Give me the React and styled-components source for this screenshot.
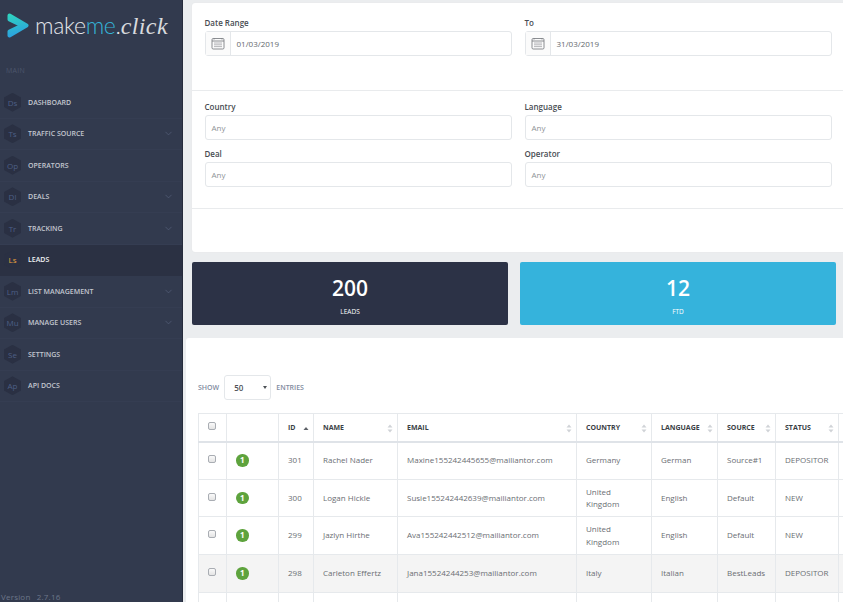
import React from 'react';
import styled, { createGlobalStyle } from 'styled-components';
import { ChevronDown } from 'lucide-react';

const GlobalStyle = createGlobalStyle`
  html, body {
    margin: 0;
    padding: 0;
    height: 100%;
    overflow: hidden;
    font-family: 'Open Sans', sans-serif;
    background: #ebedef;
  }
  * { box-sizing: border-box; }
`;

const Page = styled.div`
  display: grid;
  grid-template-columns: 183px 1fr;
  width: 843px;
  height: 602px;
  overflow: hidden;
`;

const Sidebar = styled.aside`
  display: flex;
  flex-direction: column;
  height: 602px;
  background: #323a4e;
  border-right: 1px solid #262c3c;
`;

const Logo = styled.div`
  display: flex;
  align-items: center;
  height: 50px;
  padding-left: 6px;
`;

const LogoWord = styled.span`
  margin-left: 6px;
  font-family: Lato, sans-serif;
  font-weight: 300;
  font-size: 23px;
  letter-spacing: -0.3px;
  color: #e4e6ea;
  white-space: nowrap;
`;

const LogoAccent = styled.span`
  color: #35b4d8;
`;

const LogoScript = styled.span`
  font-family: 'Liberation Serif', serif;
  font-style: italic;
  font-size: 24px;
  letter-spacing: 0.4px;
  color: #d8dade;
`;

const SectionLabel = styled.div`
  margin-top: 16px;
  padding-left: 6px;
  font-size: 7px;
  line-height: 10px;
  color: #4c556c;
  letter-spacing: 0.3px;
`;

const Nav = styled.nav`
  display: flex;
  flex-direction: column;
  margin-top: 11px;
`;

const NavItem = styled.div`
  display: flex;
  align-items: center;
  height: 31.5px;
  padding: 0 8px 0 4px;
  background: ${(p) => (p.$active ? '#2b3143' : 'transparent')};
  border-bottom: 1px solid ${(p) => (p.$active ? '#2b3143' : '#353d52')};
`;

const Hex = styled.span`
  display: flex;
  align-items: center;
  justify-content: center;
  flex: none;
  width: 17px;
  height: 19px;
  clip-path: polygon(50% 0, 100% 25%, 100% 75%, 50% 100%, 0 75%, 0 25%);
  background: #2a3043;
  font-size: 8px;
  color: ${(p) => (p.$active ? '#e8a23d' : '#4d5f85')};
`;

const NavLabel = styled.span`
  flex: 1;
  margin-left: 7px;
  font-size: 7px;
  font-weight: 600;
  color: ${(p) => (p.$active ? '#f0f1f4' : '#c2c6cf')};
  white-space: nowrap;
`;

const NavChevron = styled(ChevronDown)`
  color: #56607a;
`;

const Version = styled.div`
  margin-top: auto;
  padding: 0 0 0 1px;
  height: 11px;
  font-size: 8px;
  line-height: 11px;
  letter-spacing: 0.2px;
  color: #6d7689;
  word-spacing: 4px;
`;

const Main = styled.main`
  display: flex;
  flex-direction: column;
  padding-top: 3px;
  min-width: 0;
`;

const FilterPanel = styled.section`
  display: flex;
  flex-direction: column;
  height: 249px;
  margin-left: 9px;
  background: #fff;
  border-radius: 3px 0 0 3px;
  box-shadow: 0 0 1px #d9dcdf;
`;

const FilterRow = styled.div`
  display: grid;
  grid-template-columns: 307px 307px;
  column-gap: 13px;
  align-content: start;
  height: ${(p) => p.$height}px;
  padding: ${(p) => p.$top}px 0 0 12.5px;
  border-bottom: ${(p) => (p.$line ? '1px solid #e9ebed' : 'none')};
`;

const Field = styled.label`
  display: flex;
  flex-direction: column;
  margin-bottom: 8.5px;
`;

const FieldLabel = styled.span`
  height: 14px;
  font-size: 8px;
  line-height: 11px;
  font-weight: 600;
  color: #484c52;
`;

const InputBox = styled.div`
  display: flex;
  align-items: center;
  height: 24.5px;
  border: 1px solid #e4e7ea;
  border-radius: 3px;
  background: #fff;
  font-size: 8px;
  color: ${(p) => (p.$placeholder ? '#8e9296' : '#64686d')};
`;

const IconAddon = styled.span`
  display: flex;
  align-items: center;
  justify-content: center;
  flex: none;
  width: 25px;
  height: 100%;
  border-right: 1px solid #e4e7ea;
  background: #fbfbfb;
  color: #7d8085;
`;

const InputText = styled.span`
  padding-left: 6px;
`;

const Stats = styled.div`
  display: grid;
  grid-template-columns: 316px 316px;
  column-gap: 12px;
  margin: 10px 0 0 9px;
`;

const StatCard = styled.div`
  display: flex;
  flex-direction: column;
  align-items: center;
  height: 63px;
  padding-top: 12px;
  border-radius: 2px;
  background: ${(p) => p.$bg};
  color: #fff;
`;

const StatValue = styled.div`
  font-size: 21px;
  line-height: 29px;
  font-weight: 600;
`;

const StatLabel = styled.div`
  margin-top: 4px;
  font-size: 6.5px;
  line-height: 10px;
`;

const TablePanel = styled.section`
  flex: 1;
  margin: 13px 0 0 3px;
  padding: 37px 0 0 12px;
  background: #fff;
  border-radius: 3px 0 0 0;
  overflow: hidden;
`;

const LengthRow = styled.div`
  display: flex;
  align-items: center;
  gap: 5px;
  margin-bottom: 13px;
  font-size: 7px;
  font-weight: 600;
  color: #7f8ba0;
`;

const LengthSelect = styled.div`
  display: flex;
  align-items: center;
  justify-content: space-between;
  width: 47px;
  height: 25px;
  padding: 0 3px 0 9px;
  border: 1px solid #e4e7ea;
  border-radius: 3px;
  font-size: 8px;
  font-weight: 600;
  color: #4d5156;
`;

const Caret = styled.span`
  width: 0;
  height: 0;
  border-left: 2.5px solid transparent;
  border-right: 2.5px solid transparent;
  border-top: 3.5px solid #4d5156;
`;

const Table = styled.table`
  width: 650px;
  table-layout: fixed;
  border-collapse: collapse;
  font-size: 8px;
  color: #6a6e73;
`;

const Th = styled.th`
  position: relative;
  height: 28px;
  padding: 0 0 0 9px;
  border: 1px solid #e6e9ec;
  border-bottom: 2px solid #dfe3e8;
  text-align: left;
  font-size: 7px;
  font-weight: 700;
  color: #3b3f46;
`;

const SortIcon = styled.svg`
  position: absolute;
  right: 4px;
  top: 10px;
`;

const Tr = styled.tr`
  background: ${(p) => (p.$hover ? '#f4f4f4' : '#fff')};
`;

const Td = styled.td`
  height: 37.7px;
  padding: 0 ${(p) => (p.$wrap ? 14 : 0)}px 0 9px;
  border: 1px solid #e6e9ec;
  line-height: 12.5px;
  white-space: ${(p) => (p.$wrap ? 'normal' : 'nowrap')};
`;

const CheckCell = styled.td`
  height: 37.7px;
  padding: 0 0 0 9px;
  border: 1px solid #e6e9ec;
`;

const Check = styled.span`
  display: block;
  width: 8px;
  height: 8px;
  margin-top: -3px;
  border: 1px solid #a9adb3;
  border-radius: 2px;
  background: linear-gradient(#fafafa, #e4e4e4);
`;

const Badge = styled.span`
  display: flex;
  align-items: center;
  justify-content: center;
  width: 12.5px;
  height: 12.5px;
  border-radius: 50%;
  background: #5ea33d;
  color: #fff;
  font-size: 8px;
  font-weight: 700;
`;

const CalendarIcon = () => (
  <svg width="14" height="13" viewBox="0 0 14 13" fill="none" stroke="currentColor" strokeWidth="0.9">
    <rect x="1" y="1.5" width="12" height="10.5" rx="1.2" />
    <path d="M1 4h12M3 1v1.5M11 1v1.5" />
    <path d="M3 6h8M3 7.8h8M3 9.6h8" strokeWidth="0.8" opacity="0.7" />
  </svg>
);

const LogoMark = () => (
  <svg width="23" height="25" viewBox="0 0 23 25">
    <defs>
      <linearGradient id="logoGrad" gradientUnits="userSpaceOnUse" x1="4" y1="0" x2="10" y2="25">
        <stop offset="0" stopColor="#2fd6bd" />
        <stop offset="1" stopColor="#2b9de2" />
      </linearGradient>
    </defs>
    <path
      d="M3.5 2.5 L20.5 12.5 L3.5 22.5 L3.5 18.5 L16 12.5 L3.5 6.5 Z"
      fill="url(#logoGrad)"
      stroke="url(#logoGrad)"
      strokeWidth="4"
      strokeLinejoin="round"
    />
  </svg>
);

const SortArrows = ({ active }) => (
  <SortIcon width="6" height="9" viewBox="0 0 6 9">
    {active ? (
      <path d="M3 3 L5.5 6 H0.5Z" fill="#5d6168" />
    ) : (
      <>
        <path d="M3 0.5 L5.5 3.5 H0.5Z" fill="#d0d3d7" />
        <path d="M3 8.5 L5.5 5.5 H0.5Z" fill="#d0d3d7" />
      </>
    )}
  </SortIcon>
);

const navItems = [
  { short: 'Ds', label: 'DASHBOARD' },
  { short: 'Ts', label: 'TRAFFIC SOURCE', sub: true },
  { short: 'Op', label: 'OPERATORS' },
  { short: 'Dl', label: 'DEALS', sub: true },
  { short: 'Tr', label: 'TRACKING', sub: true },
  { short: 'Ls', label: 'LEADS', active: true },
  { short: 'Lm', label: 'LIST MANAGEMENT', sub: true },
  { short: 'Mu', label: 'MANAGE USERS', sub: true },
  { short: 'Se', label: 'SETTINGS' },
  { short: 'Ap', label: 'API DOCS' },
];

const columns = [
  { width: 28 },
  { width: 52 },
  { width: 35, label: 'ID', active: true },
  { width: 84, label: 'NAME' },
  { width: 179, label: 'EMAIL' },
  { width: 75, label: 'COUNTRY' },
  { width: 66, label: 'LANGUAGE' },
  { width: 58, label: 'SOURCE' },
  { width: 63, label: 'STATUS' },
  { width: 10 },
];

const leads = [
  { id: 301, name: 'Rachel Nader', email: 'Maxine155242445655@mailiantor.com', country: 'Germany', language: 'German', source: 'Source#1', status: 'DEPOSITOR' },
  { id: 300, name: 'Logan Hickle', email: 'Susie155242442639@mailiantor.com', country: 'United Kingdom', language: 'English', source: 'Default', status: 'NEW' },
  { id: 299, name: 'Jazlyn Hirthe', email: 'Ava155242442512@mailiantor.com', country: 'United Kingdom', language: 'English', source: 'Default', status: 'NEW' },
  { id: 298, name: 'Carleton Effertz', email: 'Jana15524244253@mailiantor.com', country: 'Italy', language: 'Italian', source: 'BestLeads', status: 'DEPOSITOR', hover: true },
];

const App = () => (
  <Page>
    <GlobalStyle />
    <Sidebar>
      <Logo>
        <LogoMark />
        <LogoWord>
          make<LogoAccent>me</LogoAccent>.<LogoScript>click</LogoScript>
        </LogoWord>
      </Logo>
      <SectionLabel>MAIN</SectionLabel>
      <Nav>
        {navItems.map((item) => (
          <NavItem key={item.short} $active={item.active}>
            <Hex $active={item.active}>{item.short}</Hex>
            <NavLabel $active={item.active}>{item.label}</NavLabel>
            {item.sub && <NavChevron size={11} strokeWidth={1.5} />}
          </NavItem>
        ))}
      </Nav>
      <Version>Version 2.7.16</Version>
    </Sidebar>
    <Main>
      <FilterPanel>
        <FilterRow $height={88} $top={14} $line>
          <Field>
            <FieldLabel>Date Range</FieldLabel>
            <InputBox>
              <IconAddon><CalendarIcon /></IconAddon>
              <InputText>01/03/2019</InputText>
            </InputBox>
          </Field>
          <Field>
            <FieldLabel>To</FieldLabel>
            <InputBox>
              <IconAddon><CalendarIcon /></IconAddon>
              <InputText>31/03/2019</InputText>
            </InputBox>
          </Field>
        </FilterRow>
        <FilterRow $height={118} $top={10} $line>
          {['Country', 'Language', 'Deal', 'Operator'].map((label) => (
            <Field key={label}>
              <FieldLabel>{label}</FieldLabel>
              <InputBox $placeholder>
                <InputText>Any</InputText>
              </InputBox>
            </Field>
          ))}
        </FilterRow>
      </FilterPanel>
      <Stats>
        <StatCard $bg="#2c3246">
          <StatValue>200</StatValue>
          <StatLabel>LEADS</StatLabel>
        </StatCard>
        <StatCard $bg="#35b3dc">
          <StatValue>12</StatValue>
          <StatLabel>FTD</StatLabel>
        </StatCard>
      </Stats>
      <TablePanel>
        <LengthRow>
          SHOW
          <LengthSelect>50<Caret /></LengthSelect>
          ENTRIES
        </LengthRow>
        <Table>
          <colgroup>
            {columns.map((col, i) => (
              <col key={i} style={{ width: col.width }} />
            ))}
          </colgroup>
          <thead>
            <tr>
              <Th><Check /></Th>
              {columns.slice(1).map((col, i) => (
                <Th key={i}>
                  {col.label}
                  {col.label && <SortArrows active={col.active} />}
                </Th>
              ))}
            </tr>
          </thead>
          <tbody>
            {leads.map((lead) => (
              <Tr key={lead.id} $hover={lead.hover}>
                <CheckCell><Check /></CheckCell>
                <Td><Badge>1</Badge></Td>
                <Td>{lead.id}</Td>
                <Td>{lead.name}</Td>
                <Td>{lead.email}</Td>
                <Td $wrap>{lead.country}</Td>
                <Td>{lead.language}</Td>
                <Td>{lead.source}</Td>
                <Td>{lead.status}</Td>
                <Td />
              </Tr>
            ))}
            <Tr>
              <CheckCell />
              <Td />
              <Td />
              <Td />
              <Td />
              <Td />
              <Td />
              <Td />
              <Td />
              <Td />
            </Tr>
          </tbody>
        </Table>
      </TablePanel>
    </Main>
  </Page>
);

export default App;
